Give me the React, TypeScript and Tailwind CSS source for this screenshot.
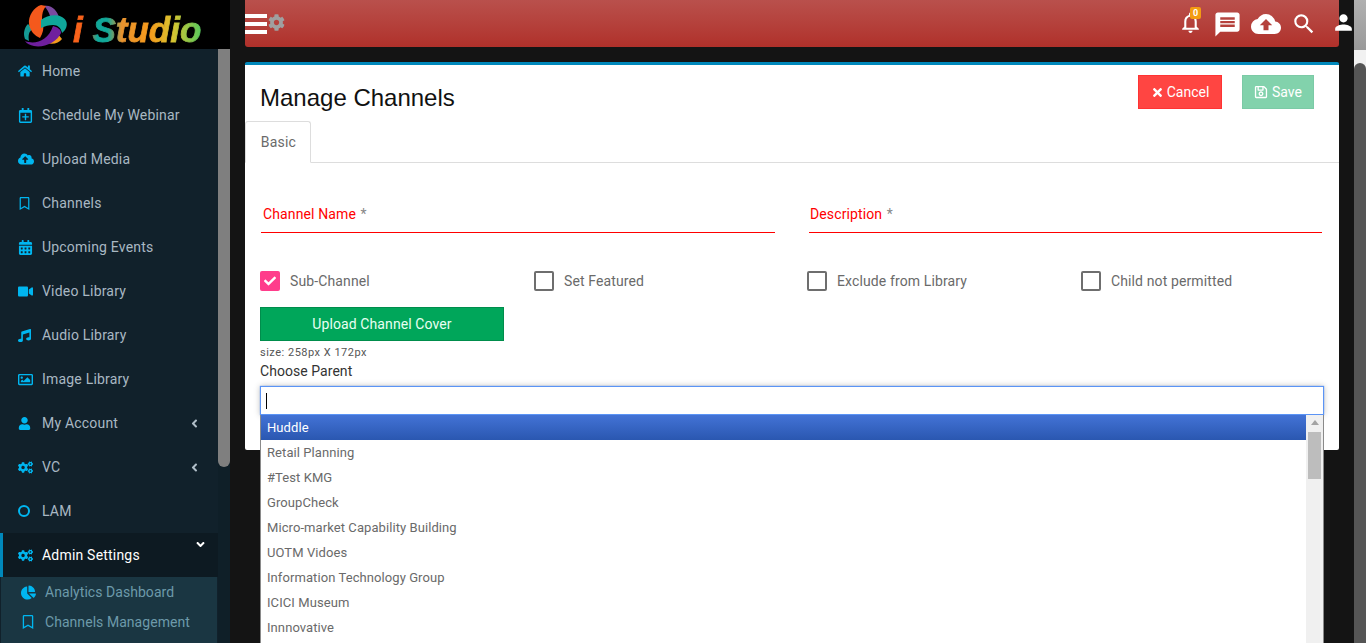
import React from "react";
import { FaHome, FaRegCalendarPlus, FaCloudUploadAlt, FaRegBookmark, FaCalendarAlt, FaVideo, FaMusic, FaRegImage, FaUser, FaCogs, FaChartPie, FaAngleLeft, FaAngleDown, FaTimes, FaRegSave, FaCog, FaCheck } from "react-icons/fa";
import { MdNotificationsNone, MdMessage, MdCloudUpload, MdSearch, MdPerson } from "react-icons/md";

const font = "font-['Roboto',sans-serif]";

const items: { label: string; icon: React.ReactNode; caret?: boolean }[] = [
  { label: "Home", icon: <FaHome size={14} /> },
  { label: "Schedule My Webinar", icon: <FaRegCalendarPlus size={15} /> },
  { label: "Upload Media", icon: <FaCloudUploadAlt size={16} /> },
  { label: "Channels", icon: <FaRegBookmark size={13} /> },
  { label: "Upcoming Events", icon: <FaCalendarAlt size={15} /> },
  { label: "Video Library", icon: <FaVideo size={15} /> },
  { label: "Audio Library", icon: <FaMusic size={13} /> },
  { label: "Image Library", icon: <FaRegImage size={15} /> },
  { label: "My Account", icon: <FaUser size={13} />, caret: true },
  { label: "VC", icon: <FaCogs size={15} />, caret: true },
  { label: "LAM", icon: <span className="block w-[12px] h-[12px] rounded-full border-[2px] border-[#00b6f0]" />, },
];

const parents = ["Huddle", "Retail Planning", "#Test KMG", "GroupCheck", "Micro-market Capability Building", "UOTM Vidoes", "Information Technology Group", "ICICI Museum", "Innnovative"];

function Logo() {
  return (
    <div className="h-[49px] bg-black flex items-center pl-[20px] shrink-0">
      <svg width="50" height="49" viewBox="0 0 50 49" className="shrink-0">
        <path d="M8 24 C4 28 3 34 5 39 L9 41 C8 35 9 31 13 29 Z" fill="#159a94" />
        <path d="M24 6 C31 4 38 11 39 18 L30 16 C29 12 27 9 24 6 Z" fill="#7b4aa0" />
        <path d="M21 5 C14 7 8 16 9 24 C10 31 15 36 20 38 C23 33 24 28 23 24 C21 18 22 11 26 6 Z" fill="#f4591c" />
        <path d="M21 20 C28 14 42 13 46 21 C48 25 46 30 42 33 C41 28 38 25 33 25 C29 25 25 26 21 28 Z" fill="#10a79a" />
        <path d="M27 43 C33 45 39 43 42 39 L38 34 C36 39 32 42 27 43 Z" fill="#f39a1e" />
        <path d="M5 41 C15 45 28 41 33 26 C37 27 41 29 41 33 C37 42 24 48 14 46 C10 45 7 44 5 41 Z" fill="#6f1f9e" />
      </svg>
      <span className="ml-[3px] mt-[11px] font-['Liberation_Sans',sans-serif] italic font-bold text-[35px] leading-[40px] whitespace-pre [-webkit-text-stroke:0.8px_transparent] bg-[linear-gradient(90deg,#f8621a_0%,#f8621a_10%,#0fa89a_19%,#12a898_27%,#e8932f_38%,#f59a1c_60%,#d8c530_78%,#58c85c_100%)] bg-clip-text text-transparent">i Studio</span>
    </div>
  );
}

function Sidebar() {
  return (
    <aside className="w-[230px] shrink-0 flex flex-col h-full">
      <Logo />
      <div className="flex-1 flex min-h-0">
        <nav className="w-[218px] bg-[#11212b] overflow-hidden">
          {items.map((it) => (
            <div key={it.label} className="h-[44px] flex items-center pl-[18px] pr-[17px] text-[#a9b8c3] text-[14px] tracking-[0.2px]">
              <span className="w-[24px] text-[#00b6f0] flex items-center shrink-0">{it.icon}</span>
              <span className="flex-1">{it.label}</span>
              {it.caret && <FaAngleLeft size={13} className="text-[#b0bec8]" />}
            </div>
          ))}
          <div className="h-[44px] flex items-center pl-[15px] pr-[11px] bg-[#0d1a22] border-l-[3px] border-[#0088bb] text-white text-[14px] tracking-[0.2px]">
            <span className="w-[24px] text-[#00b6f0] shrink-0"><FaCogs size={15} /></span>
            <span className="flex-1">Admin Settings</span>
            <FaAngleDown size={13} className="mb-[22px]" />
          </div>
          <div className="bg-[#1a3642] ml-px mr-px h-[66px] text-[#6d9aaa] text-[14px] tracking-[0.05px]">
            <div className="h-[30px] flex items-center pl-[20px]"><span className="w-[24px] text-[#00b6f0] shrink-0"><FaChartPie size={15} /></span>Analytics Dashboard</div>
            <div className="h-[30px] flex items-center pl-[20px]"><span className="w-[24px] text-[#00b6f0] shrink-0"><FaRegBookmark size={14} /></span>Channels Management</div>
          </div>
        </nav>
        <div className="w-[12px] bg-[#0f1f28]">
          <div className="h-[418px] bg-[#7f7f7f] rounded-b-[6px]" />
        </div>
      </div>
    </aside>
  );
}

function Check({ label, checked, w }: { label: string; checked?: boolean; w: string }) {
  return (
    <div className={`${w} flex items-center`}>
      {checked ? (
        <span className="w-[20px] h-[20px] rounded-[2px] bg-[#ff3d8b] flex items-center justify-center text-white"><FaCheck size={12} /></span>
      ) : (
        <span className="w-[20px] h-[20px] rounded-[2px] border-2 border-[#6e6e6e] bg-white" />
      )}
      <span className="ml-[10px] text-[14px] tracking-[0.12px] text-[#6a6a6a]">{label}</span>
    </div>
  );
}

function Field({ label, w, pad }: { label: string; w: string; pad: string }) {
  return (
    <div className={`${w} ${pad} h-[37px] border-b border-b-[#f00] pt-[8px] text-[14px] leading-[20px] tracking-[0.12px] text-[#f00]`}>
      {label} <span className="text-[#888] ml-px">*</span>
    </div>
  );
}

function Dropdown() {
  return (
    <div className="relative h-[29px] w-[1064px] border border-[#5b94f5] bg-white shadow-[0_0_1px_#5b94f5,0_0_6px_rgba(0,0,0,0.25)] flex items-center pl-[5px]">
      <span className="w-px h-[16px] bg-black" />
      <div className="absolute left-[-1px] top-[28px] w-[1064px] h-[260px] bg-white border-x border-[#8a8a8a] flex overflow-hidden">
        <ul className="flex-1">
          {parents.map((p, i) => (
            <li key={p} className={`h-[25px] flex items-center pl-[6px] text-[13px] tracking-[0.08px] ${i === 0 ? "bg-gradient-to-b from-[#4373d6] to-[#2a57b0] text-white" : "text-[#6a6a6a]"}`}>{p}</li>
          ))}
        </ul>
        <div className="w-[17px] bg-[#f0f0f0] flex flex-col items-center">
          <span className="mt-[5px] w-0 h-0 border-x-[4px] border-x-transparent border-b-[5px] border-b-[#a3a3a3]" />
          <span className="mt-[7px] w-[13px] h-[47px] bg-[#bdbdbd]" />
        </div>
      </div>
    </div>
  );
}

function Main() {
  return (
    <main className="flex-1 min-w-0 px-[15px] bg-[#141414]">
      <header className="h-[47px] rounded-b-[3px] bg-gradient-to-b from-[#b9504c] to-[#b0302a] flex items-center text-white">
        <div className="flex flex-col gap-[4px] w-[22px]">
          <span className="h-[4px] bg-white" /><span className="h-[4px] bg-white" /><span className="h-[4px] bg-white" />
        </div>
        <FaCog size={17} className="text-[#a0a0a0] ml-[1px] mb-[2px]" />
        <div className="flex-1" />
        <div className="relative mr-[10px] mb-[2px]">
          <MdNotificationsNone size={25} />
          <span className="absolute right-[2px] top-[-3px] w-[11px] h-[12px] rounded-[2px] bg-[#f39c12] text-white text-[9px] leading-[12px] text-center font-bold">0</span>
        </div>
        <MdMessage size={29} className="mr-[9px] mt-[1px]" />
        <MdCloudUpload size={30} className="mr-[10px]" />
        <MdSearch size={26} className="mr-[14px]" />
        <MdPerson size={25} className="mr-[-17px] mb-[2px]" />
      </header>
      <section className="mt-[15px] h-[388px] rounded-[2px] bg-white border-t-[3px] border-[#0088bb]">
        <div className="h-[98px] relative">
          <h1 className="pl-[15px] pt-[18px] text-[24px] leading-[30px] text-[#111] font-['Liberation_Sans',sans-serif]">Manage Channels</h1>
          <div className="absolute top-[10px] right-[25px] flex gap-[20px]">
            <button className="w-[84px] h-[34px] bg-[#ff4542] border border-[#f33] text-white text-[14px] flex items-center justify-center gap-[3px]"><FaTimes size={13} />Cancel</button>
            <button className="w-[72px] h-[34px] bg-[#82d2ac] border border-[#7bcaa6] text-white text-[14px] flex items-center justify-center gap-[4px]"><FaRegSave size={14} />Save</button>
          </div>
          <div className="absolute left-0 right-0 bottom-0 h-[42px] border-b border-[#ddd]">
            <div className="w-[66px] h-[42px] border border-b-white border-[#ddd] rounded-t-[3px] bg-white flex items-center justify-center pl-px text-[14px] tracking-[0.2px] text-[#6a6a6a]">Basic</div>
          </div>
        </div>
        <div className="px-[15px] pt-[33px]">
          <div className="flex pl-px gap-[34px]"><Field w="w-[514px]" pad="pl-[2px]" label="Channel Name" /><Field w="w-[513px]" pad="pl-[1px]" label="Description" /></div>
          <div className="flex mt-[37px] h-[22px] items-center">
            <Check w="w-[274px]" label="Sub-Channel" checked />
            <Check w="w-[273px]" label="Set Featured" />
            <Check w="w-[274px]" label="Exclude from Library" />
            <Check w="w-[240px]" label="Child not permitted" />
          </div>
          <button className="block mt-[15px] w-[244px] h-[34px] bg-[#00a65a] border border-[#008d4c] text-[#e8fff2] text-[14px] tracking-[0.1px]">Upload Channel Cover</button>
          <div className="mt-[4px] text-[11px] leading-[16px] tracking-[0.5px] text-[#555]">size: 258px X 172px</div>
          <div className="text-[14px] leading-[20px] tracking-[0.05px] text-[#333] mb-[5px]">Choose Parent</div>
          <Dropdown />
        </div>
      </section>
    </main>
  );
}

export default function App() {
  return (
    <div className={`w-[1366px] h-[643px] overflow-hidden flex bg-[#141414] ${font}`}>
      <Sidebar />
      <Main />
      <div className="w-[12px] shrink-0 flex flex-col bg-[#f1f1f1]">
        <div className="h-[50px] bg-gradient-to-b from-[#b0b0b0] to-[#999]" />
        <div className="h-[13px]" />
        <div className="flex-1 bg-[#555] rounded-t-[6px]" />
      </div>
    </div>
  );
}
